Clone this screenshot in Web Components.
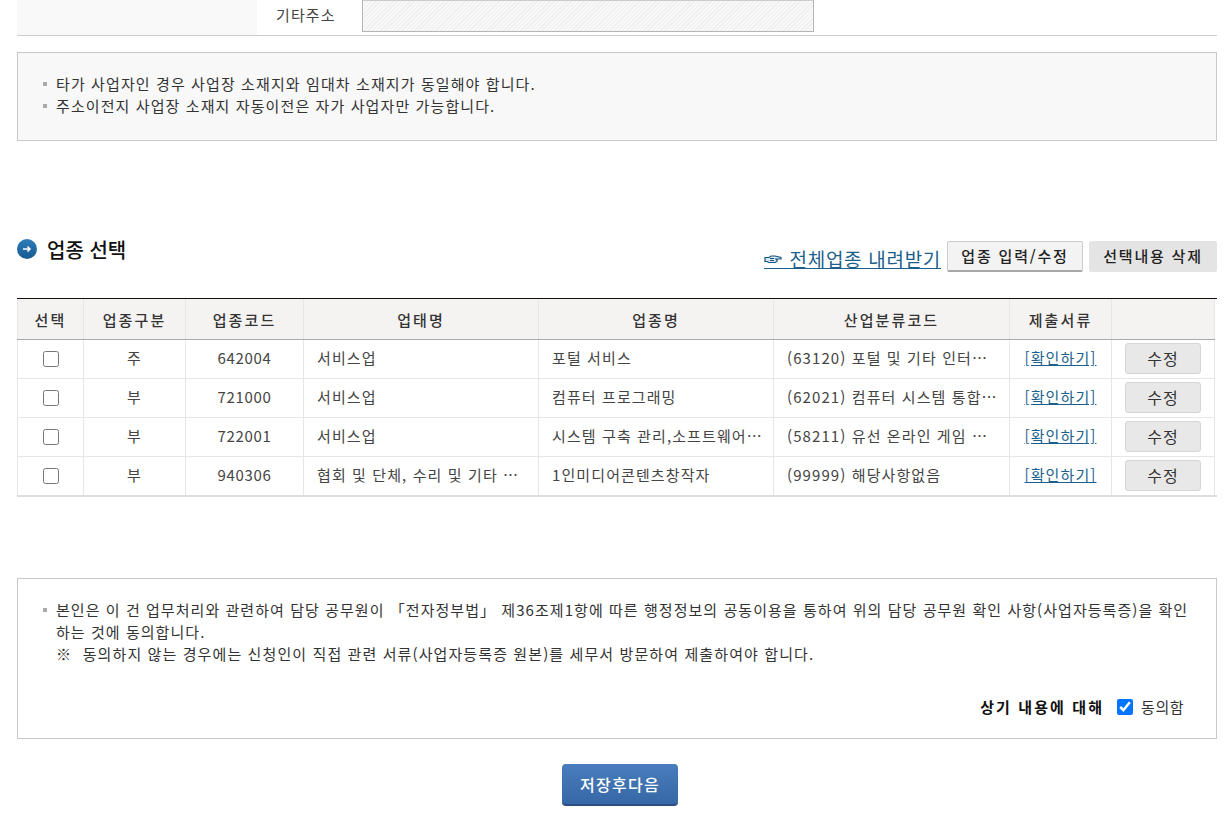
<!DOCTYPE html>
<html lang="ko">
<head>
<meta charset="utf-8">
<title>업종 선택</title>
<style>
  html, body { margin: 0; padding: 0; background: #fff; }
  body {
    font-family: "Noto Sans CJK KR", "Liberation Sans", sans-serif;
    font-size: 15px;
    letter-spacing: 1.1px;
    color: #333;
    overflow: hidden;
  }
</style>
</head>
<body>
<biz-page>
  <addr-row label="기타주소"></addr-row>

  <note-box>
    <li>타가 사업자인 경우 사업장 소재지와 임대차 소재지가 동일해야 합니다.</li>
    <li>주소이전지 사업장 소재지 자동이전은 자가 사업자만 가능합니다.</li>
  </note-box>

  <section-head title="업종 선택"></section-head>

  <biz-table></biz-table>

  <consent-box></consent-box>

  <save-button>저장후다음</save-button>
</biz-page>

<script>
class BizPage extends HTMLElement {
  constructor() {
    super()
    this.attachShadow({ mode: 'open' })
    this.shadowRoot.innerHTML = `
      <style>
        :host { display: block; width: 1200px; margin-left: 17px; }
      </style>
      <slot></slot>
    `
  }
}

class AddrRow extends HTMLElement {
  constructor() {
    super()
    this.attachShadow({ mode: 'open' })
    this.shadowRoot.innerHTML = `
      <style>
        :host { display: flex; height: 35px; border-bottom: 1px solid #ccc; }
        .side { width: 240px; background: #f9f9f9; }
        .label { width: 105px; padding-left: 19px; box-sizing: border-box; line-height: 30px; color: #444; white-space: nowrap; }
        .field {
          width: 452px; height: 32px; box-sizing: border-box;
          border: 1px solid #b5b5b5; border-top-color: #ccc;
          background: repeating-linear-gradient(135deg, #eeeeee 0 1px, #f8f8f8 1px 3px);
        }
      </style>
      <div class="side"></div>
      <div class="label"></div>
      <div class="field"></div>
    `
    this.shadowRoot.querySelector('.label').textContent = this.getAttribute('label')
  }
}

class NoteBox extends HTMLElement {
  constructor() {
    super()
    this.attachShadow({ mode: 'open' })
    this.shadowRoot.innerHTML = `
      <style>
        :host {
          display: block; box-sizing: border-box; height: 89px; margin-top: 16px;
          border: 1px solid #c8c8c8; background: #f8f8f8;
          padding: 20px 38px 0;
        }
        ul { margin: 0; padding: 0; list-style: none; }
        ::slotted(li) {
          display: block; line-height: 22px; color: #333;
          background: linear-gradient(#aaa, #aaa) no-repeat 0 9px / 4px 4px;
          margin-left: -13px; padding-left: 13px;
        }
      </style>
      <ul><slot></slot></ul>
    `
  }
}

class SectionHead extends HTMLElement {
  constructor() {
    super()
    this.attachShadow({ mode: 'open' })
    this.shadowRoot.innerHTML = `
      <style>
        :host { display: flex; align-items: flex-start; height: 74px; margin-top: 83px; }
        .title { display: flex; align-items: center; gap: 10px; margin-top: 12px; font-size: 20px; font-weight: 500; color: #111; line-height: 28px; letter-spacing: 0; }
        .title svg { display: block; margin-top: -3px; }
        .tools { margin-left: auto; display: flex; align-items: flex-start; padding-top: 17px; }
        a {
          display: flex; align-items: center; gap: 8px; height: 28px; box-sizing: border-box; padding-top: 8px; margin-right: 6px;
          color: #1c5f8c; font-size: 19px; letter-spacing: .7px; line-height: 19px; text-decoration: none;
          border-bottom: 1px solid #1c5f8c; white-space: nowrap;
        }
        a svg { display: block; margin-top: 1px; }
        .btn {
          box-sizing: border-box; height: 31px; line-height: 28px; text-align: center;
          font-weight: 500; color: #222; letter-spacing: 1.8px; white-space: nowrap;
        }
        .edit { width: 136px; background: #f3f3f3; border: 1px solid #ccc; border-bottom: 2px solid #a8a8a8; border-radius: 2px; }
        .del { width: 128px; margin-left: 6px; background: #e4e4e4; border-radius: 2px; line-height: 30px; }
      </style>
      <div class="title">
        <svg width="20" height="20" viewBox="0 0 20 20">
          <defs><linearGradient id="g" x1="0" y1="0" x2="0" y2="1"><stop offset="0" stop-color="#2f7db8"/><stop offset="1" stop-color="#155a93"/></linearGradient></defs>
          <circle cx="10" cy="10" r="10" fill="url(#g)"/>
          <path d="M6 10h7M10.5 7.5L13 10l-2.5 2.5" fill="none" stroke="#fff" stroke-width="1.5"/>
        </svg>
        <span></span>
      </div>
      <div class="tools">
        <a href="#">
          <svg width="18" height="9" viewBox="0 0 18 9">
            <path d="M1 2.5h4l2-1.5h4l6 1.5v1.5h-5l1 1v1.5l-2 1H5l-2-1H1z" fill="#d8e6f0" stroke="#14557f" stroke-width="1.2"/>
            <path d="M6 3.5h4M6 5.5h4" stroke="#14557f" stroke-width="1"/>
          </svg>
          <span>전체업종 내려받기</span>
        </a>
        <div class="btn edit">업종 입력/수정</div>
        <div class="btn del">선택내용 삭제</div>
      </div>
    `
    this.shadowRoot.querySelector('.title span').textContent = this.getAttribute('title')
  }
}

// the cut-off cells keep the text as far as the reference shows it
const ROWS = [
  ['주', '642004', '서비스업', '포털 서비스', '(63120) 포털 및 기타 인터⋯'],
  ['부', '721000', '서비스업', '컴퓨터 프로그래밍', '(62021) 컴퓨터 시스템 통합⋯'],
  ['부', '722001', '서비스업', '시스템 구축 관리,소프트웨어⋯', '(58211) 유선 온라인 게임 ⋯'],
  ['부', '940306', '협회 및 단체, 수리 및 기타 ⋯', '1인미디어콘텐츠창작자', '(99999) 해당사항없음']
]

class BizTable extends HTMLElement {
  constructor() {
    super()
    this.attachShadow({ mode: 'open' })
    const body = ROWS.map(r => `
      <tr>
        <td class="box"><input type="checkbox"></td>
        <td>${r[0]}</td>
        <td class="num">${r[1]}</td>
        <td class="l">${r[2]}</td>
        <td class="l">${r[3]}</td>
        <td class="l">${r[4]}</td>
        <td><a href="#">[확인하기]</a></td>
        <td><span class="fix">수정</span></td>
      </tr>`).join('')
    this.shadowRoot.innerHTML = `
      <style>
        :host { display: block; width: 1200px; border-top: 1px solid #111; border-bottom: 2px solid #ddd; }
        table { width: 1197px; table-layout: fixed; border-collapse: collapse; }
        th {
          height: 40px; padding: 0; background: #f5f3f2; font-weight: 500; color: #333;
          border-left: 1px solid #e6e6e6; border-right: 1px solid #e6e6e6; border-bottom: 1px solid #aaa; letter-spacing: 2.1px;
        }
        td {
          height: 39px; box-sizing: border-box; padding: 0 0 2px; text-align: center; color: #444;
          border: 1px solid #e6e6e6; line-height: 34px;
        }
        td.box { padding: 0; }
        td.num { letter-spacing: .7px; }
        tbody tr:last-child td { height: 38px; padding-bottom: 1px; border-bottom: 0; }
        tbody tr:last-child td.box { padding: 0; }
        td.l { text-align: left; padding-left: 13px; white-space: nowrap; }
        input { display: block; width: 16px; height: 16px; margin: 0 auto; }
        a { color: #1c5f8c; text-decoration: underline; }
        .fix {
          display: block; width: 76px; height: 31px; line-height: 28px; box-sizing: border-box; margin: 0 auto 0 13px;
          background: #e8e8e8; border: 1px solid #d5d5d5; border-radius: 3px; color: #333; font-size: 16px; letter-spacing: 1px;
        }
      </style>
      <table>
        <colgroup>
          <col style="width:66px"><col style="width:102px"><col style="width:118px"><col style="width:235px">
          <col style="width:235px"><col style="width:236px"><col style="width:102px"><col style="width:103px">
        </colgroup>
        <thead>
          <tr><th>선택</th><th>업종구분</th><th>업종코드</th><th>업태명</th><th>업종명</th><th>산업분류코드</th><th>제출서류</th><th></th></tr>
        </thead>
        <tbody>${body}</tbody>
      </table>
    `
  }
}

class ConsentBox extends HTMLElement {
  constructor() {
    super()
    this.attachShadow({ mode: 'open' })
    this.shadowRoot.innerHTML = `
      <style>
        :host {
          display: block; box-sizing: border-box; height: 161px; margin-top: 81px;
          border: 1px solid #c8c8c8; padding: 20px 27px 0 38px; line-height: 22px; color: #333;
        }
        p { margin: 0; position: relative; letter-spacing: 1.05px; }
        p::before { content: ""; position: absolute; left: -13px; top: 9px; width: 4px; height: 4px; background: #aaa; }
        .agree { display: flex; justify-content: flex-end; align-items: center; margin-top: 31px; padding-right: 5px; }
        b { font-weight: 700; color: #111; letter-spacing: 2.1px; }
        input { width: 16px; height: 16px; margin: 0 8px 0 13px; accent-color: #0075ff; }
        span { letter-spacing: .5px; }
      </style>
      <p>본인은 이 건 업무처리와 관련하여 담당 공무원이 「전자정부법」 제36조제1항에 따른 행정정보의 공동이용을 통하여 위의 담당 공무원 확인 사항(사업자등록증)을 확인하는 것에 동의합니다.</p>
      <div>※ &nbsp;동의하지 않는 경우에는 신청인이 직접 관련 서류(사업자등록증 원본)를 세무서 방문하여 제출하여야 합니다.</div>
      <div class="agree"><b>상기 내용에 대해</b><input type="checkbox" checked><span>동의함</span></div>
    `
  }
}

class SaveButton extends HTMLElement {
  constructor() {
    super()
    this.attachShadow({ mode: 'open' })
    this.shadowRoot.innerHTML = `
      <style>
        :host { display: block; margin-top: 25px; }
        div {
          box-sizing: border-box; width: 116px; height: 42px; margin-left: 545px;
          background: linear-gradient(#4a7dbd, #3667a6); border-bottom: 2px solid #2a4f80; border-radius: 4px;
          color: #fff; font-size: 16px; letter-spacing: 1.3px; font-weight: 500; text-align: center; line-height: 40px;
        }
      </style>
      <div><slot></slot></div>
    `
  }
}

customElements.define('biz-page', BizPage)
customElements.define('addr-row', AddrRow)
customElements.define('note-box', NoteBox)
customElements.define('section-head', SectionHead)
customElements.define('biz-table', BizTable)
customElements.define('consent-box', ConsentBox)
customElements.define('save-button', SaveButton)
</script>
</body>
</html>
